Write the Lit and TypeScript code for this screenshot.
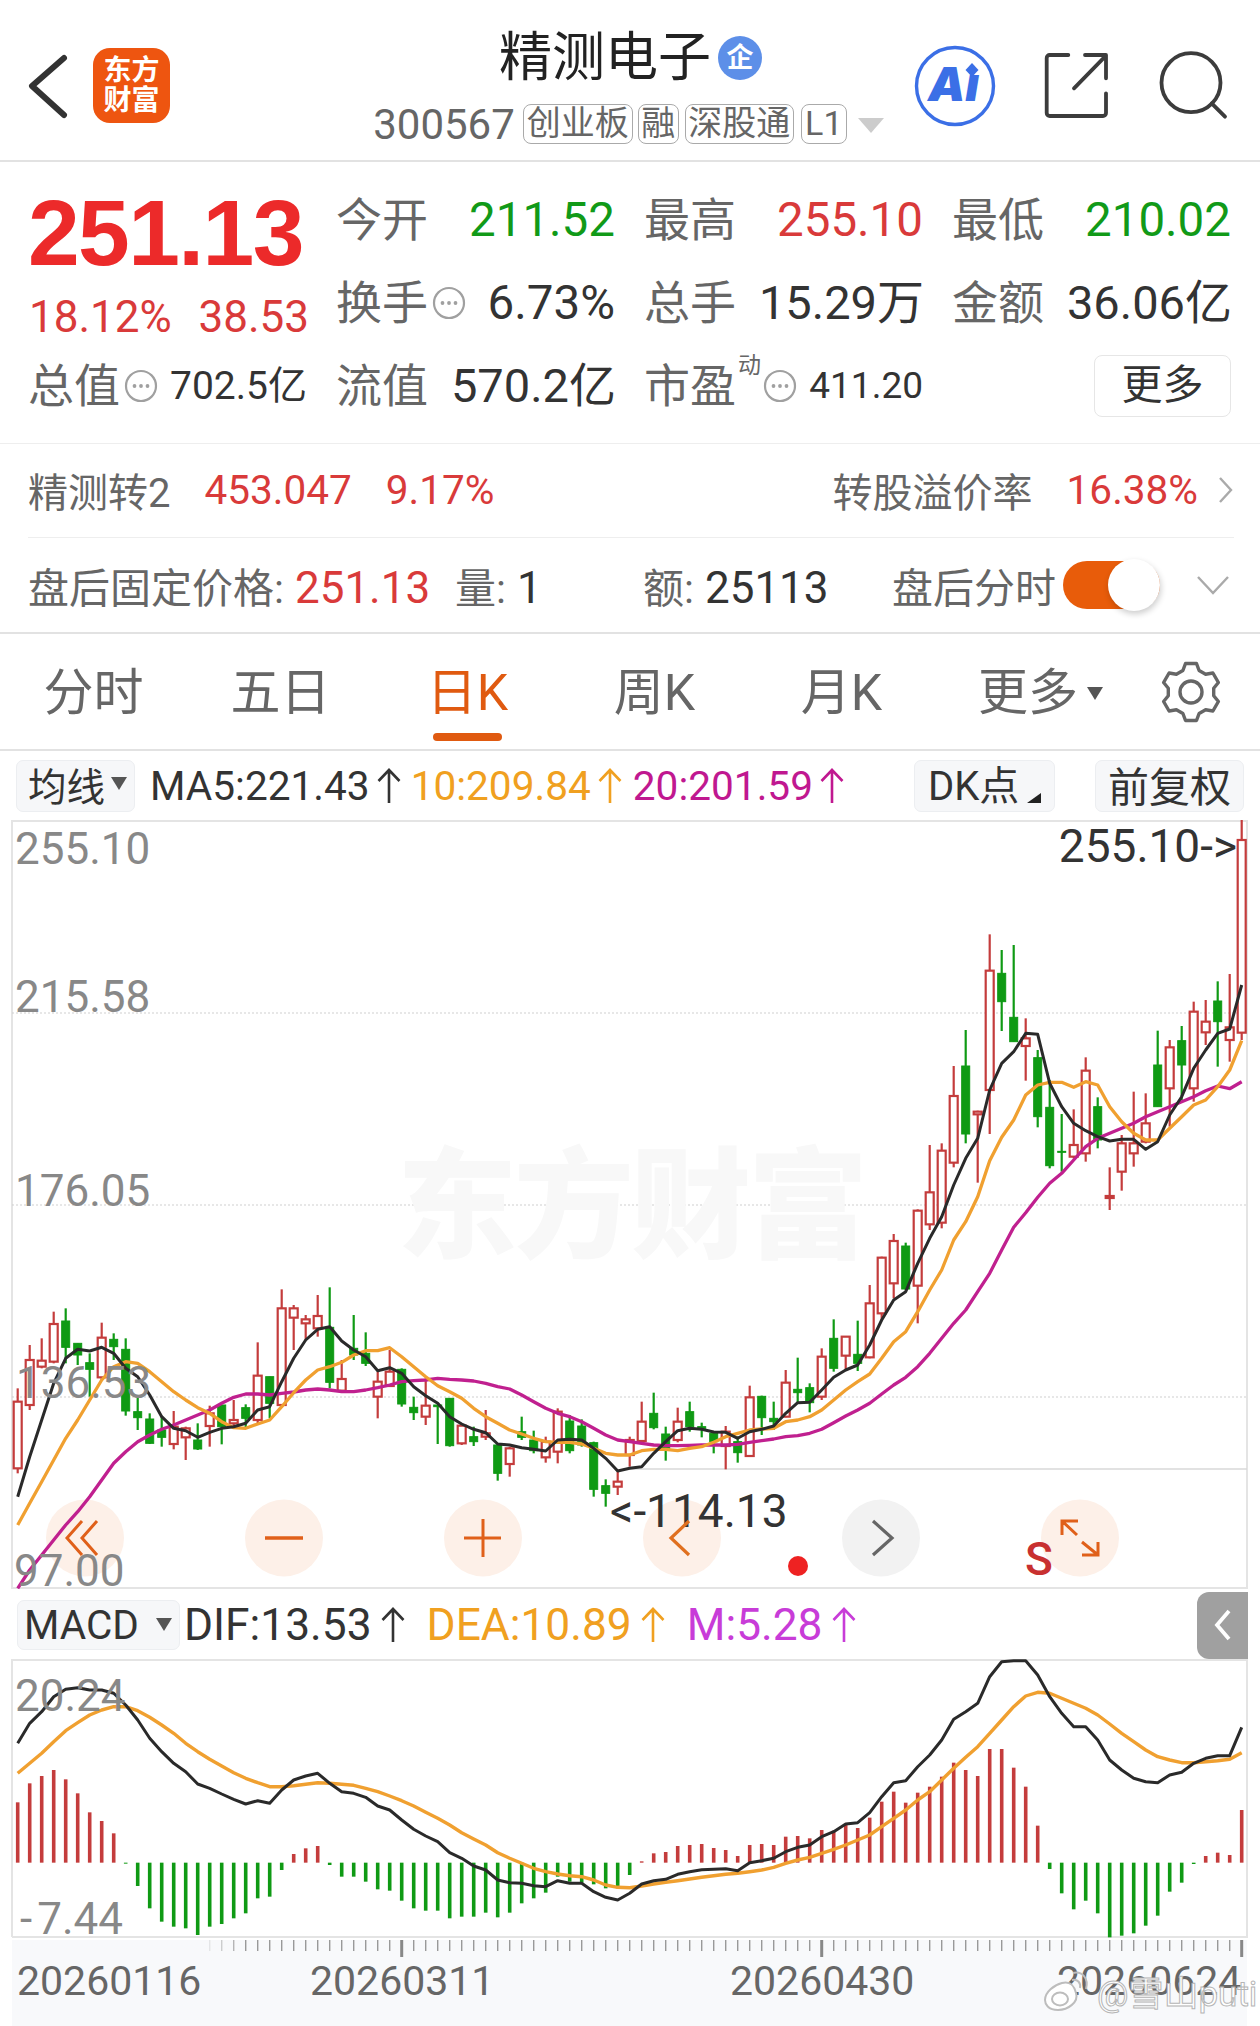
import { LitElement, html, svg, css } from 'lit';
import { customElement } from 'lit/decorators.js';

// y values below are read off the chart at 3x, see ky() and my()
// [wick top, body top, body bottom, wick bottom, red?]
const CANDLES: number[][] = [
  [445, 485, 685, 700, 1], [315, 360, 495, 510, 1], [295, 362, 380, 385, 1], [215, 252, 365, 370, 1],
  [205, 243, 322, 370, 0], [310, 310, 345, 375, 0], [340, 368, 388, 470, 0], [248, 293, 412, 420, 1],
  [280, 298, 320, 360, 0], [295, 328, 513, 527, 0], [465, 515, 533, 570, 0], [520, 537, 610, 612, 0],
  [530, 570, 592, 620, 0], [513, 560, 612, 628, 1], [560, 565, 592, 660, 1], [550, 600, 627, 630, 0],
  [497, 520, 558, 620, 1], [495, 495, 560, 613, 0], [480, 540, 550, 565, 1], [493, 503, 535, 562, 0],
  [307, 407, 540, 550, 1], [410, 410, 490, 535, 0], [148, 205, 495, 500, 1], [195, 205, 233, 330, 1],
  [225, 238, 250, 300, 1], [165, 228, 265, 290, 1], [142, 262, 427, 445, 0], [360, 417, 452, 455, 1],
  [225, 325, 345, 360, 0], [277, 340, 370, 378, 0], [395, 425, 470, 535, 1], [330, 395, 438, 440, 1],
  [385, 388, 492, 500, 0], [470, 502, 518, 540, 0], [415, 497, 530, 555, 1], [495, 495, 500, 612, 0],
  [475, 475, 617, 620, 0], [555, 557, 610, 615, 1], [560, 590, 605, 618, 0], [510, 580, 590, 600, 1],
  [612, 615, 700, 722, 0], [620, 625, 672, 710, 1], [530, 575, 592, 600, 0], [572, 600, 632, 640, 0],
  [590, 605, 652, 668, 1], [505, 515, 635, 670, 1], [525, 543, 632, 640, 0], [538, 558, 615, 620, 0],
  [605, 608, 748, 770, 0], [718, 737, 760, 800, 0], [695, 725, 740, 765, 1], [590, 600, 645, 680, 1],
  [485, 545, 603, 605, 1], [458, 520, 563, 568, 0], [560, 582, 625, 662, 0], [503, 545, 600, 607, 1],
  [485, 515, 560, 575, 0], [548, 560, 565, 592, 0], [580, 580, 605, 640, 0], [558, 575, 618, 688, 1],
  [590, 605, 638, 668, 0], [437, 472, 648, 650, 1], [467, 469, 533, 585, 0], [485, 535, 545, 570, 0],
  [390, 428, 530, 532, 1], [353, 448, 458, 490, 0], [430, 443, 488, 517, 0], [325, 350, 470, 480, 1],
  [238, 295, 385, 395, 0], [290, 290, 347, 390, 1], [242, 343, 370, 393, 0], [135, 190, 352, 355, 1],
  [50, 53, 220, 240, 1], [-18, 3, 130, 175, 1], [8, 18, 147, 150, 0], [-92, -88, 137, 250, 1],
  [-285, -143, -47, -30, 1], [-290, -268, -52, -35, 1], [-522, -432, -232, -218, 1], [-630, -522, -318, -290, 0],
  [-388, -385, -377, -172, 1], [-917, -808, -450, -318, 1], [-870, -800, -715, -627, 0], [-885, -668, -595, -595, 0],
  [-665, -605, -582, -478, 1], [-570, -547, -370, -338, 0], [-480, -398, -223, -215, 0], [-378, -266, -264, -205, 0],
  [-392, -285, -250, -245, 1], [-548, -508, -260, -235, 1], [-428, -400, -300, -275, 0], [-218, -132, -126, -90, 1],
  [-315, -290, -205, -148, 1], [-445, -290, -260, -220, 1], [-440, -350, -295, -290, 1], [-628, -525, -400, -400, 0],
  [-600, -578, -455, -340, 1], [-642, -598, -525, -420, 0], [-715, -685, -455, -415, 1], [-720, -655, -623, -585, 1],
  [-776, -717, -655, -520, 0], [-798, -638, -600, -535, 1], [-1260, -1200, -622, -600, 1],
];

const MA5 = [
  770, 650, 540, 430, 355, 328, 333, 322, 340, 385, 410, 465, 530, 565, 572, 592, 577, 565, 560, 550,
  510, 500, 425, 355, 300, 268, 260, 303, 330, 350, 392, 383, 400, 440, 467, 490, 530, 552, 568, 578,
  612, 615, 623, 628, 633, 600, 598, 600, 625, 655, 693, 685, 680, 640, 605, 572, 565, 568, 576, 577,
  595, 575, 568, 558, 520, 488, 487, 450, 412, 390, 375, 315, 240, 180, 155, 70, -5, -70, -165, -245,
  -305, -450, -530, -565, -620, -617, -470, -400, -350, -328, -310, -297, -302, -302, -272, -295, -375,
  -430, -515, -570, -620, -633, -765,
];
const MA10 = [
  855, 790, 725, 660, 595, 540, 480, 420, 380, 365, 370, 395, 425, 455, 480, 503, 520, 545, 563, 565,
  552, 540, 500, 458, 420, 390, 380, 367, 345, 332, 332, 323, 350, 380, 410, 437, 455, 475, 505, 530,
  550, 570, 582, 595, 605, 607, 607, 612, 625, 640, 645, 645, 632, 628, 628, 632, 625, 620, 607, 590,
  580, 570, 567, 565, 545, 540, 530, 510, 480, 450, 425, 402, 355, 305, 275, 215, 150, 90, 0, -55,
  -130, -238, -308, -360, -435, -465, -473, -473, -458, -475, -465, -400, -355, -320, -300, -300, -335,
  -370, -405, -420, -460, -510, -598,
];
const MA20 = [
  1045, 990, 945, 900, 855, 815, 770, 720, 670, 635, 605, 585, 568, 555, 540, 525, 510, 490, 472, 462,
  462, 465, 460, 456, 450, 447, 450, 455, 455, 450, 443, 435, 425, 422, 420, 415, 418, 420, 423, 430,
  440, 447, 465, 485, 505, 520, 530, 545, 565, 585, 600, 605, 610, 615, 617, 617, 616, 615, 615, 615,
  613, 607, 602, 597, 590, 587, 580, 568, 548, 528, 510, 490, 462, 435, 412, 380, 340, 295, 250, 210,
  155, 100, 30, -38, -82, -128, -170, -200, -240, -280, -305, -320, -335, -350, -370, -385, -400, -415,
  -430, -448, -462, -454, -475,
];

const HIST = [
  487, 430, 408, 390, 418, 460, 517, 543, 580, 668, 738, 805, 845, 860, 865, 885, 860, 852, 835, 820,
  775, 770, 690, 642, 625, 618, 675, 710, 710, 725, 748, 752, 782, 805, 812, 812, 835, 830, 830, 818,
  832, 818, 790, 775, 758, 710, 725, 728, 733, 745, 745, 705, 664, 640, 636, 618, 615, 612, 624, 630,
  648, 615, 612, 615, 590, 588, 595, 570, 572, 553, 564, 533, 485, 455, 488, 458, 440, 410, 368, 390,
  408, 327, 327, 383, 440, 557, 687, 760, 808, 782, 820, 892, 887, 880, 857, 827, 755, 728, 672, 648,
  638, 645, 510,
];
const DIF = [
  310, 250, 215, 170, 148, 143, 150, 150, 160, 195, 240, 295, 335, 370, 395, 432, 445, 462, 478, 492,
  482, 490, 450, 420, 408, 400, 430, 455, 460, 472, 498, 510, 540, 568, 588, 605, 638, 655, 678, 690,
  720, 728, 730, 737, 740, 722, 730, 730, 755, 772, 780, 760, 732, 722, 718, 703, 695, 689, 688, 686,
  692, 668, 662, 655, 635, 622, 615, 590, 575, 552, 548, 518, 470, 428, 422, 380, 345, 300, 238, 215,
  190, 110, 65, 62, 62, 105, 170, 220, 260, 260, 300, 360, 390, 415, 425, 428, 405, 397, 370, 355,
  347, 347, 262,
];
const DEA = [
  400, 370, 340, 305, 272, 248, 225, 210, 200, 200, 212, 232, 255, 280, 310, 335, 358, 378, 398, 415,
  428, 440, 440, 437, 433, 428, 430, 433, 436, 445, 455, 468, 482, 498, 517, 535, 555, 578, 597, 615,
  638, 655, 670, 685, 695, 702, 707, 710, 720, 735, 742, 743, 738, 732, 727, 722, 717, 712, 707, 703,
  700, 695, 690, 682, 670, 660, 652, 640, 628, 615, 600, 585, 560, 535, 510, 480, 455, 420, 385, 352,
  320, 280, 240, 200, 168, 157, 160, 175, 190, 205, 225, 252, 280, 305, 330, 350, 360, 368, 368, 365,
  362, 358, 338,
];

const RED = '#c43c3c';
const GREEN = '#0f9a14';
const cx = (i: number) => 17.7 + 12 * i;
const ky = (v: number) => 1240 + v / 3;
const my = (v: number) => 1640 + v / 3;

const line = (vals: number[], conv: (v: number) => number) =>
  vals.map((v, i) => `${cx(i).toFixed(1)},${conv(v).toFixed(1)}`).join(' ');

function gearPath(r1: number, r2: number) {
  // six teeth, pointing up first
  let d = '';
  for (let t = 0; t < 6; t++) {
    const a = ((-90 + t * 60) * Math.PI) / 180;
    const pts = [
      [r2, a - 0.36],
      [r1, a - 0.19],
      [r1, a + 0.19],
      [r2, a + 0.36],
    ];
    for (const [r, ang] of pts) {
      d += `${d ? 'L' : 'M'}${(32 + r * Math.cos(ang)).toFixed(1)} ${(32 + r * Math.sin(ang)).toFixed(1)}`;
    }
  }
  return d + 'Z';
}

const upArrow = html`<svg class="up" viewBox="0 0 24 36">
  <path d="M12 35V2M1.5 13L12 2l10.5 11" fill="none" stroke="currentColor" stroke-width="2.6" />
</svg>`;

const dots = html`<svg class="dots" viewBox="0 0 34 34">
  <circle cx="17" cy="17" r="15" fill="none" stroke="#a0a0a0" stroke-width="2.2" />
  <circle cx="10.5" cy="17" r="1.9" fill="#a0a0a0" />
  <circle cx="17" cy="17" r="1.9" fill="#a0a0a0" />
  <circle cx="23.5" cy="17" r="1.9" fill="#a0a0a0" />
</svg>`;

@customElement('app-root')
export class AppRoot extends LitElement {
  static styles = css`
    :host {
      display: block;
      width: 1260px;
      height: 2026px;
      overflow: hidden;
      background: #fff;
      font-family: Roboto, 'Noto Sans CJK SC', sans-serif;
      color: #333;
    }
    svg {
      display: block;
      flex: none;
      overflow: visible;
    }

    /* header */
    .header {
      box-sizing: border-box;
      height: 162px;
      border-bottom: 2px solid #e2e2e2;
      display: grid;
      grid-template-columns: 1fr auto 1fr;
    }
    .head-left {
      display: flex;
      align-items: flex-start;
      padding: 48px 0 0 28px;
      gap: 25px;
    }
    .logo {
      width: 77px;
      height: 75px;
      border-radius: 17px;
      background: #ee5510;
      color: #fff;
      font-size: 28px;
      font-weight: 700;
      line-height: 30px;
      text-align: center;
      display: flex;
      align-items: center;
      justify-content: center;
    }
    .head-mid {
      display: flex;
      flex-direction: column;
      align-items: center;
      padding-top: 27px;
    }
    .title {
      display: flex;
      align-items: center;
      gap: 7px;
      height: 62px;
      margin-left: 1px;
      font-size: 53px;
      line-height: 62px;
      color: #222;
    }
    .corp {
      width: 44px;
      height: 44px;
      border-radius: 50%;
      background: #5d8fe8;
      color: #fff;
      font-size: 27px;
      line-height: 44px;
      font-weight: 700;
      text-align: center;
    }
    .code-row {
      display: flex;
      align-items: center;
      height: 40px;
      margin: 15px 3px 0 0;
    }
    .code {
      font-size: 42px;
      color: #666;
      margin-right: 8px;
    }
    .tag {
      box-sizing: border-box;
      height: 40px;
      border: 1.5px solid #aaa;
      border-radius: 8px;
      font-size: 34px;
      line-height: 36px;
      color: #666;
      text-align: center;
      white-space: nowrap;
    }
    .caret {
      width: 0;
      height: 0;
      margin: 2px 0 0 11px;
      border-left: 13px solid transparent;
      border-right: 13px solid transparent;
      border-top: 15px solid #ccc;
    }
    .head-right {
      display: flex;
      justify-content: flex-end;
      align-items: flex-start;
      padding: 44px 30px 0 0;
    }
    .ai-text {
      font-family: Inter, Roboto, sans-serif;
      font-size: 47px;
      font-weight: 900;
      font-style: italic;
      fill: #3b6fe6;
    }

    /* quote block */
    .stats {
      box-sizing: border-box;
      height: 282px;
      border-bottom: 1.5px solid #eee;
      padding: 16px 0 0 30px;
      display: grid;
      grid-template-columns: repeat(4, 277px);
      grid-auto-rows: 83px;
      column-gap: 31px;
    }
    .price-box {
      grid-row: span 2;
      padding-top: 9px;
    }
    .price {
      font-family: 'Liberation Sans', sans-serif;
      font-weight: 700;
      font-size: 93px;
      line-height: 92px;
      letter-spacing: -1.6px;
      color: #ec2a2a;
      margin-left: -2px;
    }
    .pct {
      display: flex;
      justify-content: space-between;
      font-size: 44px;
      line-height: 50px;
      color: #d93a3a;
      margin: 13px -2px 0 -1px;
    }
    .cell {
      display: flex;
      align-items: center;
      justify-content: space-between;
      height: 83px;
    }
    .lab {
      display: flex;
      align-items: center;
      gap: 4px;
      margin-left: -2px;
      font-size: 46px;
      line-height: 60px;
      color: #666;
      white-space: nowrap;
    }
    .val {
      font-size: 47.5px;
      line-height: 60px;
      white-space: nowrap;
      color: #333;
    }
    .val.wide-cjk {
      font-size: 47px;
      margin-right: -1px;
    }
    .val.small {
      font-size: 39px;
    }
    .val.tiny {
      font-size: 37px;
    }
    .up-red {
      color: #d93a3a;
    }
    .down-green {
      color: #119a18;
    }
    .dots {
      width: 34px;
      height: 34px;
    }
    .sup {
      font-size: 23px;
      line-height: 24px;
      align-self: flex-start;
      margin: -2px -2px 0 -2px;
    }
    .more-btn {
      box-sizing: border-box;
      margin-left: auto;
      width: 137px;
      height: 62px;
      border: 1.5px solid #e6e6e6;
      border-radius: 8px;
      font-size: 41px;
      line-height: 59px;
      text-align: center;
      color: #333;
    }

    /* bond row */
    .bond {
      box-sizing: border-box;
      height: 94px;
      margin: 0 26px 0 28px;
      padding-bottom: 2px;
      border-bottom: 1.5px solid #eee;
      display: flex;
      align-items: center;
      font-size: 40px;
      color: #666;
    }
    .bond .num {
      font-size: 40.5px;
      margin-left: 34px;
    }
    .bond .spacer {
      flex: 1;
    }

    /* after hours row */
    .after {
      box-sizing: border-box;
      height: 96px;
      border-bottom: 2px solid #e2e2e2;
      padding-left: 28px;
      display: grid;
      grid-template-columns: 427px 188px 249px 1fr;
      align-items: center;
      font-size: 41px;
      color: #666;
    }
    .after b {
      font-weight: 400;
      font-size: 44px;
      color: #333;
    }
    .after b.up-red {
      color: #d93a3a;
    }
    .after .lab-gap {
      margin-right: 11px;
    }
    .switch-cell {
      display: flex;
      align-items: center;
      white-space: nowrap;
    }
    .toggle {
      display: flex;
      justify-content: flex-end;
      width: 97px;
      height: 48px;
      margin-left: 7px;
      border-radius: 24px;
      background: #e85c0a;
    }
    .knob {
      width: 52px;
      height: 52px;
      margin-top: -2px;
      border-radius: 50%;
      background: #fff;
      box-shadow: 1px 3px 6px rgba(0, 0, 0, 0.2);
    }
    .chev-down {
      margin-left: 37px;
    }

    /* period tabs */
    .tabs {
      box-sizing: border-box;
      height: 117px;
      border-bottom: 2px solid #e2e2e2;
      display: grid;
      grid-template-columns: repeat(6, 187px) 1fr;
      color: #666;
      font-size: 50px;
    }
    .tab {
      display: flex;
      flex-direction: column;
      align-items: center;
      padding-top: 29px;
    }
    .tab.more {
      padding-left: 24px;
    }
    .tab-text {
      display: flex;
      align-items: center;
      height: 60px;
      line-height: 60px;
    }
    .tab-bar {
      width: 69px;
      height: 8px;
      margin-top: 10px;
      border-radius: 4px;
    }
    .tab.on {
      color: #e05a10;
    }
    .tab.on .tab-bar {
      background: #e05a10;
    }
    .tri-down {
      width: 0;
      height: 0;
      margin-left: 9px;
      border-left: 8px solid transparent;
      border-right: 8px solid transparent;
      border-top: 13px solid #555;
    }
    .gear {
      margin: 26px 0 0 37px;
    }

    /* indicator rows */
    .ind {
      display: flex;
      align-items: center;
      height: 69px;
      padding: 0 16px;
      font-size: 40.6px;
      white-space: nowrap;
    }
    .ind.macd {
      height: 70px;
      padding-left: 17px;
      font-size: 44.3px;
    }
    .btn {
      box-sizing: border-box;
      display: flex;
      align-items: center;
      height: 52px;
      padding-bottom: 4px;
      border: 1.5px solid #eceef1;
      border-radius: 7px;
      background: #f6f7f9;
      color: #333;
      font-size: 38.5px;
    }
    .btn-ma {
      width: 119px;
      padding-left: 11px;
    }
    .btn-ma .tri-down {
      margin-left: 6px;
    }
    .btn-dk {
      width: 141px;
      padding: 0 0 6px 13px;
      margin-left: auto;
      font-size: 40px;
    }
    .btn-fq {
      width: 149px;
      justify-content: center;
      margin-left: 40px;
      font-size: 41px;
    }
    .btn-macd {
      width: 163px;
      height: 50px;
      padding: 0 0 1px 6px;
      font-size: 40.5px;
    }
    .btn-macd .tri-down {
      margin-left: 17px;
    }
    .ma {
      display: flex;
      align-items: center;
      gap: 7px;
    }
    .ind.macd .ma {
      gap: 9px;
      margin-left: 22px;
    }
    .ind.macd .ma.first {
      margin-left: 4px;
    }
    .up {
      width: 24px;
      height: 36px;
    }
    .orange {
      color: #f0a020;
    }
    .pink {
      color: #c01890;
    }
    .purple {
      color: #c83cd8;
    }
    .side-tab {
      display: flex;
      align-items: center;
      justify-content: center;
      width: 51px;
      height: 67px;
      margin-left: auto;
      margin-right: -4px;
      border-radius: 12px 0 0 12px;
      background: #a0a0a0;
    }

    /* charts */
    .axis {
      font-family: Roboto, sans-serif;
      font-size: 44px;
      fill: #888;
    }
    .note {
      font-family: Roboto, sans-serif;
      font-size: 46px;
      fill: #333;
    }
    .date {
      font-family: Roboto, sans-serif;
      font-size: 41px;
      fill: #666;
    }
    .mark {
      font-family: 'Noto Sans CJK SC', sans-serif;
      font-size: 120px;
      font-weight: 900;
      letter-spacing: -3px;
      fill: #f8f8f8;
    }
    .s-mark {
      font-family: Roboto, sans-serif;
      font-size: 46px;
      font-weight: 500;
      fill: #c83030;
    }
    .weibo {
      font-family: Roboto, 'Noto Sans CJK SC', sans-serif;
      font-size: 35px;
      fill: #fff;
      stroke: #b5b5b5;
      stroke-width: 1;
    }
  `;

  renderHeader() {
    return html`<div class="header">
      <div class="head-left">
        <svg width="40" height="66" viewBox="0 0 40 66" style="margin-top:7px">
          <path d="M36 3L4 31l32 29" fill="none" stroke="#333" stroke-width="6" stroke-linecap="round" stroke-linejoin="round" />
        </svg>
        <div class="logo"><div>东方<br />财富</div></div>
      </div>
      <div class="head-mid">
        <div class="title">精测电子<span class="corp">企</span></div>
        <div class="code-row">
          <span class="code">300567</span>
          <span class="tag" style="width:110px">创业板</span>
          <span class="tag" style="width:41px;margin-left:5px">融</span>
          <span class="tag" style="width:109px;margin-left:6px">深股通</span>
          <span class="tag" style="width:46px;margin-left:7px">L1</span>
          <span class="caret"></span>
        </div>
      </div>
      <div class="head-right">
        <svg width="84" height="84" viewBox="0 0 84 84">
          <circle cx="42" cy="42" r="38.5" fill="none" stroke="#3b6fe6" stroke-width="3.4" />
          <text class="ai-text" x="15" y="57">Aı</text>
          <path d="M59 19l6.5 7-6.5 7-6.5-7z" fill="#3b6fe6" />
        </svg>
        <svg width="68" height="68" viewBox="0 0 68 68" style="margin:8px 0 0 45px">
          <path d="M26.3 3H7.7a3 3 0 0 0-3 3v55a3 3 0 0 0 3 3H61a3 3 0 0 0 3-3V41.3M32 36.3L63 4.7M43 3h21v23.3" fill="none" stroke="#3c3c3c" stroke-width="3.8" stroke-linecap="round" stroke-linejoin="round" />
        </svg>
        <svg width="72" height="72" viewBox="0 0 72 72" style="margin:4px 0 0 48px">
          <circle cx="33" cy="34.7" r="29.5" fill="none" stroke="#3c3c3c" stroke-width="3.8" />
          <path d="M53.7 55.3L67 68.7" stroke="#3c3c3c" stroke-width="3.8" stroke-linecap="round" />
        </svg>
      </div>
    </div>`;
  }

  renderStats() {
    return html`<div class="stats">
      <div class="price-box">
        <div class="price">251.13</div>
        <div class="pct"><span>18.12%</span><span>38.53</span></div>
      </div>
      <div class="cell"><span class="lab">今开</span><span class="val down-green">211.52</span></div>
      <div class="cell"><span class="lab">最高</span><span class="val up-red">255.10</span></div>
      <div class="cell"><span class="lab">最低</span><span class="val down-green">210.02</span></div>
      <div class="cell"><span class="lab">换手${dots}</span><span class="val">6.73%</span></div>
      <div class="cell"><span class="lab">总手</span><span class="val wide-cjk">15.29万</span></div>
      <div class="cell"><span class="lab">金额</span><span class="val wide-cjk">36.06亿</span></div>
      <div class="cell"><span class="lab">总值${dots}</span><span class="val small">702.5亿</span></div>
      <div class="cell"><span class="lab">流值</span><span class="val wide-cjk">570.2亿</span></div>
      <div class="cell">
        <span class="lab">市盈<span class="sup">动</span>${dots}</span><span class="val tiny">411.20</span>
      </div>
      <div class="cell"><div class="more-btn">更多</div></div>
    </div>`;
  }

  renderBond() {
    return html`<div class="bond">
      <span>精测转2</span>
      <span class="num up-red">453.047</span>
      <span class="num up-red">9.17%</span>
      <span class="spacer"></span>
      <span>转股溢价率</span>
      <span class="num up-red">16.38%</span>
      <svg width="16" height="28" viewBox="0 0 16 28" style="margin-left:20px">
        <path d="M2 2l11 12L2 26" fill="none" stroke="#aaa" stroke-width="2.4" />
      </svg>
    </div>`;
  }

  renderAfter() {
    return html`<div class="after">
      <div><span class="lab-gap">盘后固定价格:</span><b class="up-red">251.13</b></div>
      <div><span class="lab-gap">量:</span><b>1</b></div>
      <div><span class="lab-gap">额:</span><b>25113</b></div>
      <div class="switch-cell">
        <span>盘后分时</span>
        <div class="toggle"><div class="knob"></div></div>
        <svg class="chev-down" width="32" height="20" viewBox="0 0 32 20">
          <path d="M1 2l15 16L31 2" fill="none" stroke="#aaa" stroke-width="2.4" />
        </svg>
      </div>
    </div>`;
  }

  renderTabs() {
    const names = ['分时', '五日', '日K', '周K', '月K'];
    return html`<div class="tabs">
      ${names.map(
        (n) => html`<div class="tab ${n === '日K' ? 'on' : ''}">
          <div class="tab-text">${n}</div>
          <div class="tab-bar"></div>
        </div>`
      )}
      <div class="tab more">
        <div class="tab-text">更多<span class="tri-down"></span></div>
      </div>
      <svg class="gear" width="64" height="64" viewBox="0 0 64 64">
        <path d="${gearPath(29, 23)}" fill="none" stroke="#666" stroke-width="3.4" stroke-linejoin="round" />
        <circle cx="32" cy="32" r="11" fill="none" stroke="#666" stroke-width="3.4" />
      </svg>
    </div>`;
  }

  renderMaRow() {
    return html`<div class="ind">
      <div class="btn btn-ma">均线<span class="tri-down"></span></div>
      <span class="ma" style="margin-left:15px">MA5:221.43${upArrow}</span>
      <span class="ma orange" style="margin-left:10px">10:209.84${upArrow}</span>
      <span class="ma pink" style="margin-left:11px">20:201.59${upArrow}</span>
      <div class="btn btn-dk">
        DK点
        <svg width="14" height="10" viewBox="0 0 14 10" style="margin:30px 0 0 8px"><path d="M0 10L14 0v10z" fill="#222" /></svg>
      </div>
      <div class="btn btn-fq">前复权</div>
    </div>`;
  }

  renderKline() {
    const bodyW = 8;
    return html`<svg width="1260" height="770" viewBox="0 820 1260 770">
      <path d="M12 821H1247M12 820V1588H1247V820" fill="none" stroke="#e4e4e4" stroke-width="2" />
      ${[1013, 1205, 1397].map(
        (y) => svg`<line x1="12" x2="1247" y1="${y}" y2="${y}" stroke="#cfcfcf" stroke-width="1" stroke-dasharray="2 2" />`
      )}
      <line x1="630" x2="1247" y1="1469" y2="1469" stroke="#d8d8d8" stroke-width="1.5" />
      <text class="mark" x="397" y="1249">东方财富</text>

      ${[85, 284, 483, 682, 1080].map(
        (x) => svg`<ellipse cx="${x}" cy="1538" rx="39" ry="38.5" fill="#fdf0e8" />`
      )}
      <ellipse cx="881" cy="1538" rx="39" ry="38.5" fill="#f2f2f2" />

      ${CANDLES.map((c, i) => {
        const x = cx(i);
        const col = c[4] ? RED : GREEN;
        return svg`<line x1="${x}" x2="${x}" y1="${ky(c[0])}" y2="${ky(c[3])}" stroke="${col}" stroke-width="2.2" />
          <rect x="${x - bodyW / 2}" y="${ky(c[1])}" width="${bodyW}" height="${Math.max(ky(c[2]) - ky(c[1]), 1)}"
            fill="${c[4] ? '#fff' : GREEN}" stroke="${col}" stroke-width="${c[4] ? 2.2 : 1}" />`;
      })}

      <polyline points="${line(MA20, ky)}" fill="none" stroke="#c0208f" stroke-width="3.3" stroke-linejoin="round" />
      <polyline points="${line(MA10, ky)}" fill="none" stroke="#f0a030" stroke-width="3.3" stroke-linejoin="round" />
      <polyline points="${line(MA5, ky)}" fill="none" stroke="#2a2a2a" stroke-width="3" stroke-linejoin="round" />

      <text class="axis" x="15" y="864">255.10</text>
      <text class="axis" x="15" y="1012">215.58</text>
      <text class="axis" x="15" y="1206">176.05</text>
      <text class="axis" x="16" y="1398">136.53</text>
      <text class="axis" x="14" y="1586">97.00</text>
      <text class="note" x="1237" y="862" text-anchor="end">255.10-&gt;</text>
      <text class="note" x="610" y="1527">&lt;-114.13</text>

      <path d="M82 1521L67 1538l15 17M97 1521l-15 17 15 17" fill="none" stroke="#e0601a" stroke-width="3" />
      <path d="M265 1538H303" stroke="#e0601a" stroke-width="3.4" />
      <path d="M464 1538H501M483 1519V1557" stroke="#e0601a" stroke-width="3" />
      <path d="M689 1521L671 1538l18 17" fill="none" stroke="#e0701f" stroke-width="3.2" />
      <path d="M873 1521L892 1538l-19 17" fill="none" stroke="#666" stroke-width="3.2" />
      <path d="M1062 1535V1521H1078M1062 1521L1077 1535M1082 1555H1098V1542M1098 1555L1082 1542" fill="none" stroke="#e0601a" stroke-width="3" />
      <ellipse cx="798" cy="1566" rx="10" ry="10" fill="#ee2222" />
      <text class="s-mark" x="1025" y="1575">S</text>
    </svg>`;
  }

  renderMacdRow() {
    return html`<div class="ind macd">
      <div class="btn btn-macd">MACD<span class="tri-down"></span></div>
      <span class="ma first">DIF:13.53${upArrow}</span>
      <span class="ma orange">DEA:10.89${upArrow}</span>
      <span class="ma purple">M:5.28${upArrow}</span>
      <div class="side-tab">
        <svg width="18" height="34" viewBox="0 0 18 34"><path d="M15 3L3 17l12 14" fill="none" stroke="#fff" stroke-width="3.8" /></svg>
      </div>
    </div>`;
  }

  renderMacd() {
    const zero = 668;
    return html`<svg width="1260" height="278" viewBox="0 1660 1260 278">
      <path d="M12 1937V1660H1247V1937H12" fill="none" stroke="#e4e4e4" stroke-width="2" />
      ${HIST.map((v, i) => {
        const x = cx(i);
        const red = v < zero;
        const top = my(Math.min(v, zero));
        const h = Math.max(Math.abs(my(v) - my(zero)), 1);
        return svg`<rect x="${x - 1.8}" y="${top}" width="3.6" height="${h}" fill="${red ? RED : GREEN}" />`;
      })}
      <polyline points="${line(DEA, my)}" fill="none" stroke="#f0a030" stroke-width="3.4" stroke-linejoin="round" />
      <polyline points="${line(DIF, my)}" fill="none" stroke="#2a2a2a" stroke-width="3" stroke-linejoin="round" />
      <text class="axis" x="15" y="1711">20.24</text>
      <text class="axis" x="20" y="1934">-<tspan dx="5">7.44</tspan></text>
    </svg>`;
  }

  renderDates() {
    const major = [32, 67, 102];
    const ticks = CANDLES.map((_, i) => i).filter((i) => i >= 16);
    return html`<svg width="1260" height="88" viewBox="0 1938 1260 88">
      <rect x="12" y="1940" width="1235" height="86" fill="#f8f9fb" />
      ${ticks.map((i) => {
        const big = major.includes(i);
        const fade = i < 19 ? 0.2 + (i - 16) * 0.25 : 1;
        return svg`<line x1="${cx(i)}" x2="${cx(i)}" y1="1940" y2="${big ? 1957 : 1951}"
          stroke="${big ? '#888' : '#999'}" stroke-width="${big ? 3 : 1.4}" opacity="${fade}" />`;
      })}
      <text class="date" x="17" y="1995">20260116</text>
      <text class="date" x="310" y="1995">20260311</text>
      <text class="date" x="730" y="1995">20260430</text>
      <text class="date" x="1057" y="1995">20260624</text>
      <g fill="none" stroke="#bdbdbd" stroke-width="2">
        <path d="M1076 1993c3 9-8 17-18 17s-13-6-13-10c0-8 9-15 17-17 8-2 12 2 14 10z" fill="#fff" />
        <ellipse cx="1060" cy="1999" rx="8" ry="6.5" />
        <path d="M1072 1980c6-1 9 3 8 8M1073 1973c9-2 16 5 13 16" />
      </g>
      <text class="weibo" x="1097" y="2006">@雪山puti</text>
    </svg>`;
  }

  render() {
    return html`
      ${this.renderHeader()} ${this.renderStats()} ${this.renderBond()} ${this.renderAfter()} ${this.renderTabs()}
      ${this.renderMaRow()} ${this.renderKline()} ${this.renderMacdRow()} ${this.renderMacd()} ${this.renderDates()}
    `;
  }
}
